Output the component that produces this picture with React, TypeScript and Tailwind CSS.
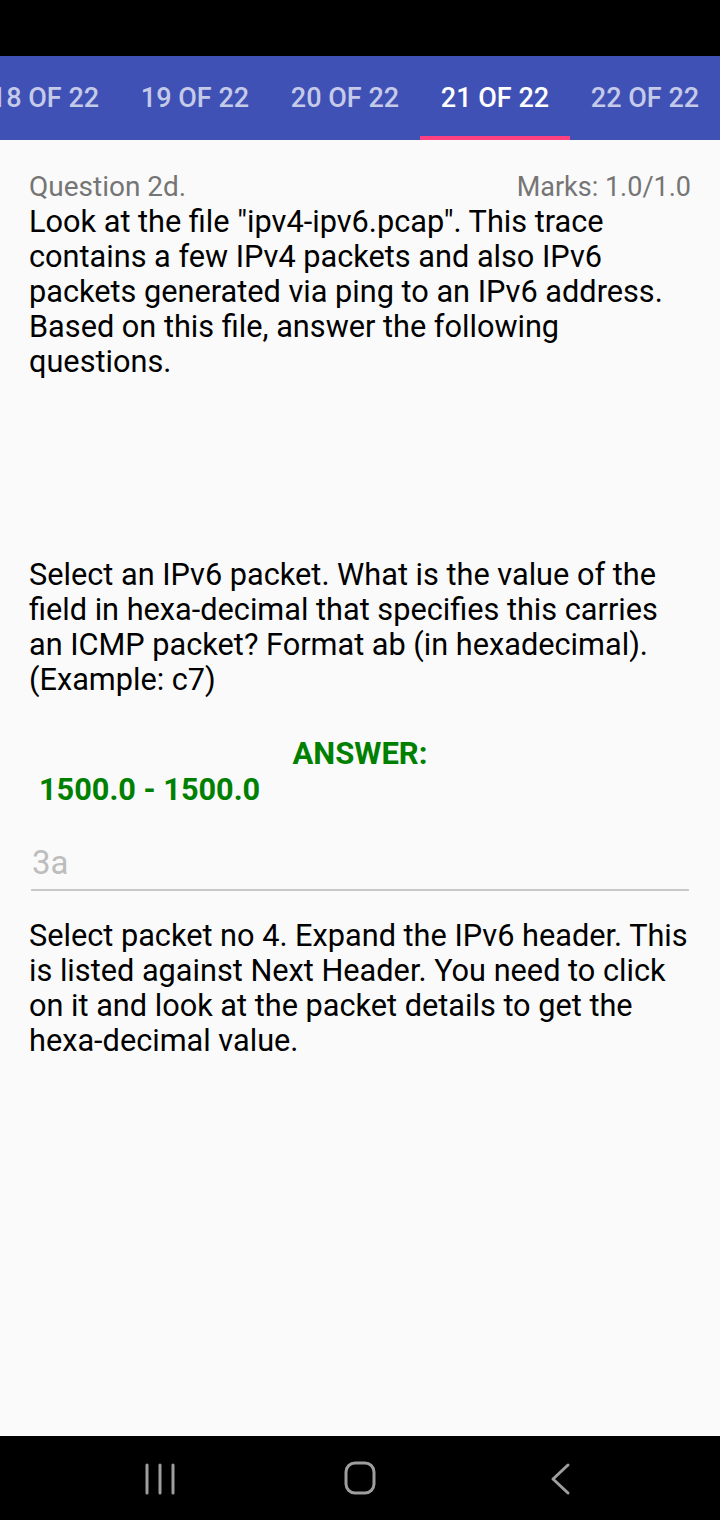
import { useState } from "react";

const tabs = ["18 OF 22", "19 OF 22", "20 OF 22", "21 OF 22", "22 OF 22"];

export default function App() {
    const [active] = useState(3);
    const [value, setValue] = useState("");

    return (
        <div className="w-[720px] h-[1520px] flex flex-col bg-[#fafafa] overflow-hidden" style={{ fontFamily: "Roboto, 'Noto Sans', sans-serif" }}>
            {/* Status bar */}
            <div className="h-[56px] bg-black shrink-0" />

            {/* Tabs */}
            <div className="h-[84px] bg-[#3f51b5] shrink-0 flex -ml-[30px]">
                {tabs.map((t, i) => (
                    <div key={t} className="w-[150px] shrink-0 flex flex-col">
                        <div
                            className={
                                "flex-1 flex items-center justify-center pt-[4px] text-[27px] font-medium whitespace-nowrap " +
                                (i === active ? "text-white" : "text-[#c5cae9]")
                            }>
                            {t}
                        </div>
                        <div className={"h-[4px] " + (i === active ? "bg-[#ff4081]" : "bg-transparent")} />
                    </div>
                ))}
            </div>

            {/* Content */}
            <div className="flex-1 px-[29px] pt-[30px] text-[30.7px] leading-[35px] text-black">
                <div className="flex justify-between text-[28px] leading-[34px] text-[#757575]">
                    <span>Question 2d.</span>
                    <span className="text-[27px]">Marks: 1.0/1.0</span>
                </div>
                <p className="-mr-[6px]">
                    Look at the file "ipv4-ipv6.pcap". This trace contains a few IPv4 packets and also IPv6 packets
                    generated via ping to an IPv6 address. Based on this file, answer the following questions.
                </p>

                <p className="mt-[178px] -mr-[6px]">
                    Select an IPv6 packet. What is the value of the field in hexa-decimal that specifies this carries an
                    ICMP packet? Format ab (in hexadecimal). (Example: c7)
                </p>

                <div className="mt-[39px] text-center font-bold text-[#008000] text-[31px] leading-[35px]">ANSWER:</div>
                <div className="pl-[10px] font-bold text-[#008000] text-[30.7px] leading-[38px]">1500.0 - 1500.0</div>

                <div className="mt-[36px] mx-[2px] border-b-2 border-[#c8c8c8] pb-[8px]">
                    <input
                        value={value}
                        onChange={(e) => setValue(e.target.value)}
                        placeholder="3a"
                        className="w-full bg-transparent outline-none text-[33px] leading-[36px] placeholder:text-[#bdbdbd] px-[1px]"
                    />
                </div>

                <p className="mt-[27px] -mr-[6px]">
                    Select packet no 4. Expand the IPv6 header. This is listed against Next Header. You need to click on
                    it and look at the packet details to get the hexa-decimal value.
                </p>
            </div>

            {/* Nav bar */}
            <div className="h-[84px] bg-black shrink-0 flex items-center justify-center gap-[160px]">
                <svg width="40" height="40" viewBox="0 0 40 40" fill="none" stroke="#9e9e9e" strokeWidth="3" strokeLinecap="round">
                    <path d="M7 7v28M20 7v28M33 7v28" />
                </svg>
                <svg width="40" height="40" viewBox="0 0 40 40" fill="none" stroke="#9e9e9e" strokeWidth="3">
                    <rect x="6" y="5" width="28" height="30" rx="9" />
                </svg>
                <svg width="40" height="40" viewBox="0 0 40 40" fill="none" stroke="#9e9e9e" strokeWidth="3" strokeLinecap="round" strokeLinejoin="round">
                    <path d="M28 7L13 21l15 14" />
                </svg>
            </div>
        </div>
    );
}
